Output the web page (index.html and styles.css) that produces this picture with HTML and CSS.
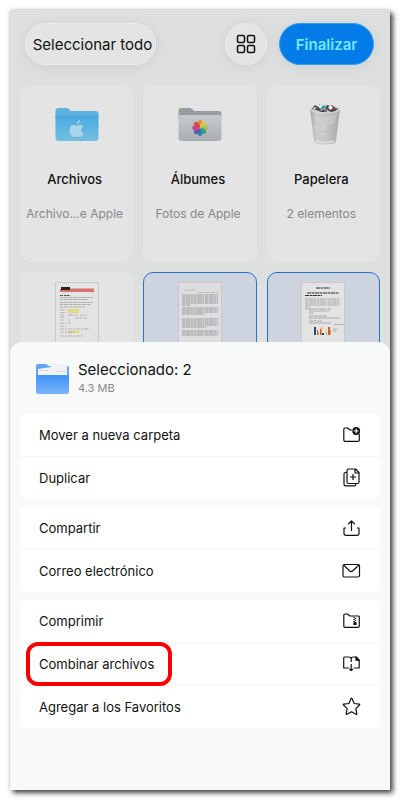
FILE: index.html
```html
<!DOCTYPE html>
<html lang="es">
<head>
  <meta charset="UTF-8">
  <meta name="viewport" content="width=device-width, initial-scale=1.0">
  <title>Archivos</title>
  <link rel="stylesheet" href="styles.css">
</head>
<body>
  <div class="phone">
    <header class="toolbar">
      <button class="pill select-all">Seleccionar todo</button>
      <button class="pill view-button" aria-label="Vista">
        <svg width="20" height="20" viewBox="0 0 20 20" fill="none" stroke="#111" stroke-width="1.5">
          <rect x="1.5" y="1.5" width="7" height="7" rx="1.5"/>
          <rect x="11.5" y="1.5" width="7" height="7" rx="1.5"/>
          <rect x="1.5" y="11.5" width="7" height="7" rx="1.5"/>
          <rect x="11.5" y="11.5" width="7" height="7" rx="1.5"/>
        </svg>
      </button>
      <button class="pill done">Finalizar</button>
    </header>

    <main class="files">
      <div class="card">
        <svg class="card-icon" viewBox="0 0 44 44">
          <defs>
            <linearGradient id="blue" x1="0" y1="0" x2="0" y2="1">
              <stop offset="0" stop-color="#4ba9df"/>
              <stop offset="1" stop-color="#71bfdf"/>
            </linearGradient>
          </defs>
          <path fill="#5fb1de" d="M.5 8q0-3 3-3h8q1.500 0 2.500 1l1.500 1.500q.5.500 1.500.500h23.500q3 0 3 3v5H.5z"/>
          <path fill="url(#blue)" d="M.5 12h43v23q0 3-3 3h-37q-3 0-3-3z"/>
          <path fill="#a9d5e8" d="M25 17c.2 2-1.500 4-3.300 3.900-.2-2 1.500-3.700 3.300-3.900zM28 23.800c-3 1.700-2.300 5.200.6 6.300-.8 2-2.100 4-3.700 4-1.200 0-1.600-.7-3-.7s-1.900.7-3 .7c-3.100 0-6.800-9.400-1.600-11.900 1.800-.8 3.200.4 4.400.4 1.100 0 2.200-.9 3.800-.8 1.100.1 1.900.7 2.500 2z"/>
        </svg>
        <div class="card-name">Archivos</div>
        <div class="card-info">Archivo...e Apple</div>
      </div>

      <div class="card">
        <svg class="card-icon" viewBox="0 0 44 44">
          <defs>
            <linearGradient id="gray" x1="0" y1="0" x2="0" y2="1">
              <stop offset="0" stop-color="#c7cacd"/>
              <stop offset="1" stop-color="#aaaeb5"/>
            </linearGradient>
          </defs>
          <path fill="#999da3" d="M.5 8q0-3 3-3h8q1.500 0 2.500 1l1.500 1.500q.5.500 1.500.500h23.500q3 0 3 3v5H.5z"/>
          <path fill="url(#gray)" d="M.5 12h43v23q0 3-3 3h-37q-3 0-3-3z"/>
          <g transform="translate(22 25)" opacity=".88">
            <ellipse cy="-4.300" rx="2.400" ry="3.600" fill="#ef8a22"/>
            <ellipse cy="-4.300" rx="2.400" ry="3.600" fill="#e6c534" transform="rotate(45)"/>
            <ellipse cy="-4.300" rx="2.400" ry="3.600" fill="#9fc447" transform="rotate(90)"/>
            <ellipse cy="-4.300" rx="2.400" ry="3.600" fill="#2d9f72" transform="rotate(135)"/>
            <ellipse cy="-4.300" rx="2.400" ry="3.600" fill="#2477a8" transform="rotate(180)"/>
            <ellipse cy="-4.300" rx="2.400" ry="3.600" fill="#4c4cab" transform="rotate(225)"/>
            <ellipse cy="-4.300" rx="2.400" ry="3.600" fill="#c63b8c" transform="rotate(270)"/>
            <ellipse cy="-4.300" rx="2.400" ry="3.600" fill="#dd3b38" transform="rotate(315)"/>
          </g>
        </svg>
        <div class="card-name">Álbumes</div>
        <div class="card-info">Fotos de Apple</div>
      </div>

      <div class="card">
        <svg class="card-icon" viewBox="0 0 44 44">
          <defs>
            <linearGradient id="bin" x1="0" y1="0" x2="1" y2="0">
              <stop offset="0" stop-color="#a4a4a4"/>
              <stop offset=".2" stop-color="#cbcbcb"/>
              <stop offset=".6" stop-color="#c2c2c2"/>
              <stop offset="1" stop-color="#a8a8a8"/>
            </linearGradient>
          </defs>
          <path fill="url(#bin)" d="M9 6l4 32q.5 3.500 11 3.500T35 38l4-32q-15-4-30 0z"/>
          <path fill="#dcdcdc" d="M15 37q9 3 18 0l-.5 2.500q-8.500 2-17 0z"/>
          <path fill="#d2d2d2" d="M12 12l10 3 8-2 6-3-2 9-9 5 4 6-8 5-5-7-5-4 5-6z" opacity=".5"/>
          <path fill="#c9aa9d" d="M27 18l3-1-1 3zM22 28l6-2-2 4z" opacity=".5"/>
          <ellipse cx="24" cy="6" rx="15" ry="4" fill="#ccc" stroke="#dadada"/>
          <path fill="#454040" d="M11 6l3-4 3 2 2-3 3 3-3 4zM24 6l2-4 3 1 2-1 3 3 3 1-3 2-4 1zM16 7l4 1 3-2 1 3-4 0z"/>
          <path fill="#f0f0f0" d="M17 3l3-2 2 3-3 2zM27 4l3-2 2 3-3 2zM12 5l3-1-1 3z"/>
          <path fill="#27a7ae" d="M20 4l3-2 2 2-3 3z"/>
          <path fill="#a44944" d="M15 3l2 1-2 3zM25 6l2-1 1 3zM33 4l2 1-2 2z"/>
          <path fill="#4862a8" d="M23 7l3 0-1 3zM30 6l2 0-1 2z"/>
        </svg>
        <div class="card-name">Papelera</div>
        <div class="card-info">2 elementos</div>
      </div>

      <div class="card document">
        <svg class="thumb" viewBox="0 0 44 72">
          <rect x=".5" y=".5" width="43" height="71" fill="#e3e3e3" stroke="#c9c9c9"/>
          <path fill="#d4746b" d="M5 7h34v3H5z"/>
          <path fill="#e1aaa4" d="M15 6h24v1H15z"/>
          <path fill="#2e2020" d="M6 5h9v3H6z"/>
          <path stroke="#555" stroke-width="1" stroke-dasharray="3 1 2 .5" d="M5 13.500h10"/>
          <path stroke="#aaa" stroke-width=".9" stroke-dasharray="3 .6 5 .5" d="M5 15.500h33M5 17.500h28M5 20.500h33M5 22.500h31M5 25h25"/>
          <path fill="#dddc7f" d="M13 27h11v4H13zM13 49h12v2H13z"/>
          <path stroke="#aaa" stroke-width=".8" stroke-dasharray="4 1 2 1" d="M5 28h6M5 30.500h6M5 33h5M13 33h10M25 33h8M5 35h4M20 36h13M5 38h5M13 38h2M5 41h6M13 41h3M5 44h6M5 47h30M5 50h7M13 50h7M5 54h23"/>
        </svg>
      </div>

      <div class="card document selected">
        <svg class="thumb" viewBox="0 0 44 72">
          <rect x=".5" y=".5" width="43" height="71" fill="#dedede" stroke="#c9c9c9"/>
          <path stroke="#aaa" stroke-width=".7" stroke-dasharray="5 1" d="M6 8h13M20 10.500h20"/>
          <path stroke="#929292" stroke-width=".9" stroke-dasharray="3 .5 5 .4 2 .6" d="M4 13h36M4 15h36M4 17h36M4 19h36M4 21h36M4 23h9M4 26h36M4 28h36M4 30h36M4 32h22M4 37h36M4 39h36M4 41h36M4 43h36M4 45h24M4 49h36M4 51h36M4 53h36"/>
        </svg>
      </div>

      <div class="card document selected">
        <svg class="thumb" viewBox="0 0 44 72">
          <rect x=".5" y=".5" width="43" height="71" fill="#e3e3e3" stroke="#c9c9c9"/>
          <path stroke="#333" stroke-width="1.200" stroke-dasharray="4 .5 3 .5" d="M15 6h14M6 11h32M4 13.500h17"/>
          <path stroke="#999" stroke-width=".8" stroke-dasharray="3 .5 5 .4 2 .6" d="M4 17h35M4 19h35M4 21h35M4 23h35M4 25h5M4 27h26"/>
          <path stroke="#999" stroke-width=".8" stroke-dasharray="4 .5" d="M8 29h20M8 31h5M8 34h18M8 36h31M8 39h13M8 41h22M33 42.500h10M32 47h4M32 49h3"/>
          <path fill="#234b70" d="M13 45h2v8h-2zM21 51h2v2h-2z"/>
          <path fill="#cf5a35" d="M16 48h1v5h-1zM19 47h2v6h-2zM27 45h2v8h-2z"/>
          <path fill="#d9a92f" d="M17 50h1v3h-1zM20 45h1v8h-1zM25 50h1v3h-1zM29 48h1v5h-1z"/>
        </svg>
      </div>
    </main>

    <section class="sheet">
      <div class="sheet-header">
        <svg width="33" height="33" viewBox="0 0 33 33">
          <defs>
            <linearGradient id="folder" x1="0" y1="0" x2="0" y2="1">
              <stop offset="0" stop-color="#3d93f7"/>
              <stop offset="1" stop-color="#7ab5fb"/>
            </linearGradient>
          </defs>
          <path fill="#64a6f5" d="M0 4q0-2 2-2h8l3 2h18q2 0 2 2v8H0z"/>
          <path fill="#f1f2f4" d="M2 7l13-2V1l13 1v2h3v9H2z"/>
          <path stroke="#d2d4d8" fill="none" d="M3 8.500h9M20 9.500h9"/>
          <path fill="url(#folder)" d="M0 13h33v17q0 2-2 2H2q-2 0-2-2z"/>
        </svg>
        <div>
          <div class="sheet-title">Seleccionado: 2</div>
          <div class="sheet-size">4.3 MB</div>
        </div>
      </div>

      <div class="group">
        <button class="action">
          <span>Mover a nueva carpeta</span>
          <svg class="icon" viewBox="0 0 20 20">
            <path d="M11 5H9L6.500 3H4Q2.800 3 2.800 4.200V15Q2.800 16.300 4 16.300H17Q18.300 16.300 18.300 15V9"/>
            <circle cx="15.200" cy="6" r="3.900" fill="#111" stroke="none"/>
            <path stroke="#fff" d="M15.200 3.700v4.600M12.900 6h4.600"/>
          </svg>
        </button>
        <button class="action">
          <span>Duplicar</span>
          <svg class="icon" viewBox="0 0 20 20">
            <path d="M7.500 1h7L18 4.500V14q0 1.500-1.500 1.500h-9Q6 15.500 6 14V2.500Q6 1 7.500 1zM14 1v4h4M12 6v6M9 9h6"/>
            <path d="M6 4.500H4.500Q3 4.500 3 6v10.200Q3 17.800 4.600 17.800h8.900q1.500 0 1.500-2"/>
          </svg>
        </button>
      </div>

      <div class="group">
        <button class="action">
          <span>Compartir</span>
          <svg class="icon" viewBox="0 0 20 20">
            <path d="M5 10H3v5.200Q3 17.300 5 17.300h11q2 0 2-2.100V10h-2M10.500 13V2.800M7 6.300l3.500-3.500L14 6.300"/>
          </svg>
        </button>
        <button class="action">
          <span>Correo electrónico</span>
          <svg class="icon" viewBox="0 0 20 20">
            <rect x="2" y="3.500" width="16.500" height="12.500" rx="1.500"/>
            <path d="M2.500 4l6 5.700q1.700 1.600 3.400 0L18 4"/>
          </svg>
        </button>
      </div>

      <div class="group">
        <button class="action">
          <span>Comprimir</span>
          <svg class="icon" viewBox="0 0 20 20">
            <path d="M11 5H9L6.500 3H4Q2.800 3 2.800 4.200V15Q2.800 16.300 4 16.300H17Q18.300 16.300 18.300 15V6.200Q18.300 5 17 5z"/>
            <path stroke-width="1.500" stroke-dasharray="1 1" d="M13 6v6M14.500 7v5"/>
            <rect x="13" y="11.500" width="2" height="2" fill="#111"/>
          </svg>
        </button>
        <button class="action">
          <span class="marked">Combinar archivos</span>
          <svg class="icon" viewBox="0 0 20 20">
            <path d="M8 14H2.700V4Q2.700 3 3.700 3H8q2.200 0 2.200 2Q10.200 3 12.500 3H15l3.200 3.200V14h-5.500M10.200 5v3M10.200 10v6.500M8.500 15l1.700 1.700 1.700-1.700"/>
            <path fill="#111" d="M15 3v3.200h3.200z"/>
          </svg>
        </button>
        <button class="action">
          <span>Agregar a los Favoritos</span>
          <svg class="icon" viewBox="0 0 20 20">
            <path d="M10 1.500q.5-.8 1 0l2.200 5 5 .6q.9.200.3.900l-3.700 3.600 1 5.200q.1.900-.8.500l-4.500-2.600L6 17.300q-.9.300-.8-.5l1-5.200L2.500 8q-.6-.7.300-.9l5.200-.6z"/>
          </svg>
        </button>
      </div>
    </section>
  </div>
</body>
</html>
```

FILE: styles.css
```css
* {
  box-sizing: border-box;
}
body {
  margin: 0;
  padding: 10px 11px 11px 10px;
  min-height: 100vh;
  display: flex;
  background: #fff;
  font-family: Inter, "Liberation Sans", sans-serif;
  color: #111;
}
button {
  font: inherit;
  color: inherit;
  border: none;
  padding: 0;
  cursor: pointer;
}
.phone {
  flex: 1;
  min-width: 0;
  display: flex;
  flex-direction: column;
  background: #dee0df;
  box-shadow: 3px 3px 5px rgba(0, 0, 0, 0.7), 0 0 4px rgba(0, 0, 0, 0.2);
}

/* Top bar */
.toolbar {
  display: flex;
  align-items: center;
  gap: 12px;
  padding: 13px 16px 20px 15px;
}
.pill {
  height: 42px;
  border-radius: 21px;
  background: #e3e5e4;
  border: 1px solid #ebecec;
  box-shadow: 0 2px 14px rgba(0, 0, 0, 0.07);
}
.select-all {
  width: 131px;
  margin-right: auto;
  padding-left: 4px;
  font-size: 15px;
  white-space: nowrap;
}
.view-button {
  width: 42px;
  display: flex;
  align-items: center;
  justify-content: center;
}
.done {
  width: 95px;
  background: #047ce8;
  border-color: #2ba0ef;
  color: #74e8ff;
  font-size: 15px;
  font-weight: 600;
}

/* File grid */
.files {
  display: grid;
  grid-template-columns: repeat(3, 1fr);
  gap: 10px;
  padding: 0 10px;
}
.card {
  height: 177px;
  padding-top: 18px;
  border-radius: 10px;
  background: #e4e4e4;
  text-align: center;
}
.card-icon {
  display: block;
  width: 44px;
  height: 44px;
  margin: 0 auto 22px;
}
.card-name,
.card-info {
  padding-right: 4px;
  line-height: 20px;
}
.card-name {
  font-size: 13px;
  font-weight: 500;
}
.card-info {
  margin-top: 15px;
  font-size: 12px;
  color: #888;
}
.document {
  height: 90px;
  padding-top: 9px;
  border: 1px solid transparent;
}
.selected {
  background: #cdd3df;
  border-color: #2472cc;
}
.thumb {
  display: block;
  width: 44px;
  height: 72px;
  margin: 0 auto;
}

/* Bottom sheet, slides over the grid */
.sheet {
  flex: 1;
  position: relative;
  margin-top: -20px;
  padding: 0 10px 20px;
  border-radius: 12px 12px 0 0;
  background: #f8faf9;
}
.sheet-header {
  display: flex;
  align-items: center;
  gap: 9px;
  height: 72px;
  padding-left: 16px;
}
.sheet-title {
  font-size: 15px;
  line-height: 20px;
}
.sheet-size {
  font-size: 11px;
  line-height: 16px;
  color: #888;
}
.group {
  margin-bottom: 8px;
  border-radius: 6px;
  background: #fff;
}
.action {
  display: flex;
  align-items: center;
  justify-content: space-between;
  width: 100%;
  height: 42px;
  padding: 0 19px;
  background: none;
  font-size: 13px;
  text-align: left;
}
.action + .action {
  height: 43px;
  border-top: 1px solid #f3f5f4;
}
.icon {
  width: 20px;
  height: 20px;
  fill: none;
  stroke: #111;
  stroke-width: 1.2;
  stroke-linejoin: round;
}
.marked {
  position: relative;
}
.marked::after {
  content: "";
  position: absolute;
  inset: -14px -18px -14px -13px;
  border: 4px solid #f80000;
  border-radius: 12px;
}
```
